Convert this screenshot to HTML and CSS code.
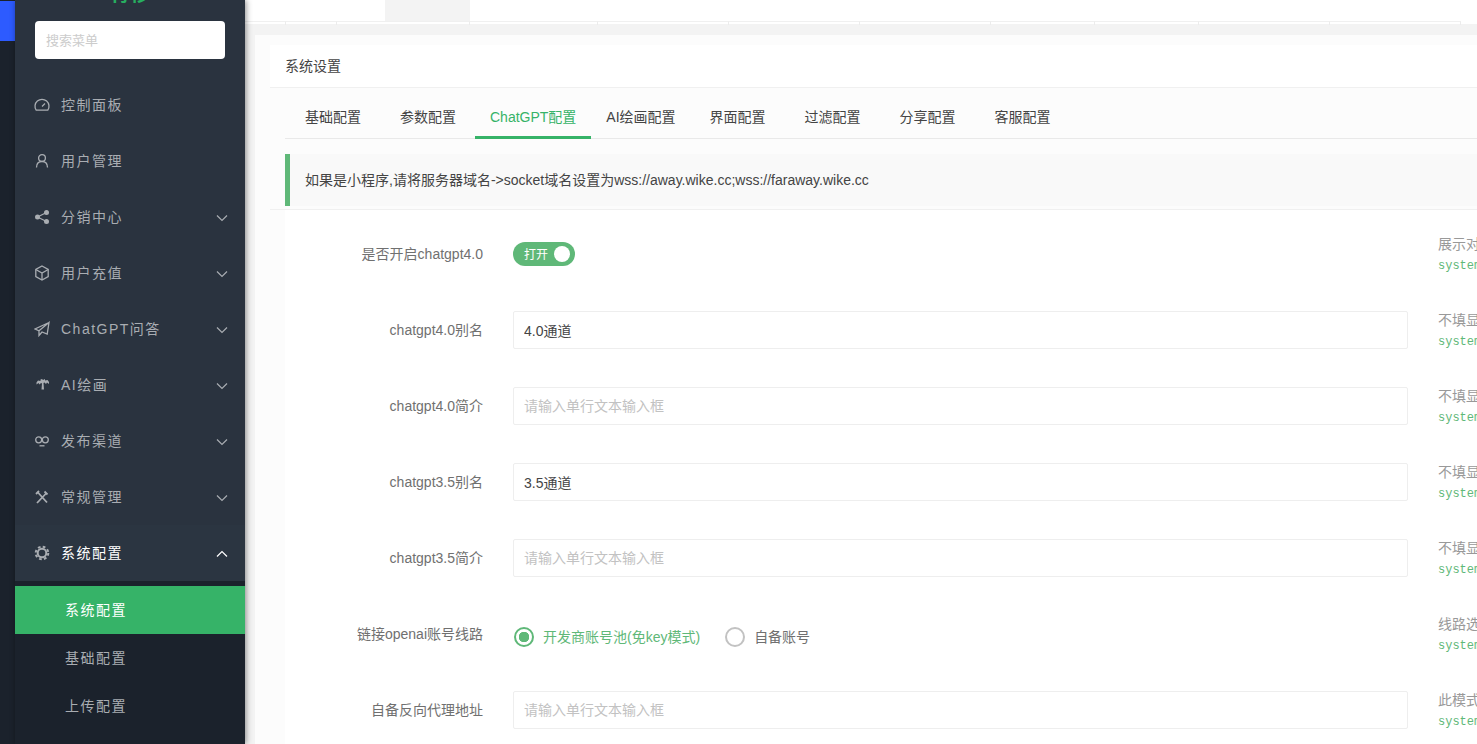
FILE: index.html
```html
<!DOCTYPE html>
<html lang="zh-CN">
<head>
    <meta charset="UTF-8">
    <title>系统设置</title>
    <link rel="stylesheet" href="styles.css">
</head>
<body>
    <div class="rail"><div class="rail-mark"></div></div>
    <aside class="side">
        <div class="logo"><span>青移</span></div>
        <div class="search"><input type="text" placeholder="搜索菜单"></div>
        <ul class="menu">
            <li class="item">
                <svg class="ico" viewBox="0 0 16 16"><path d="M2.2 13.2a7 7 0 1 1 11.6 0z"/><path d="M8 9.5l3-3"/></svg>
                <span>控制面板</span>
            </li>
            <li class="item">
                <svg class="ico" viewBox="0 0 16 16"><circle cx="8" cy="5" r="3.4"/><path d="M2.5 14.5c0-3.6 2-6 5.500-6s5.500 2.400 5.500 6"/></svg>
                <span>用户管理</span>
            </li>
            <li class="item">
                <svg class="ico fill" viewBox="0 0 16 16"><circle cx="3.500" cy="8" r="2.500"/><circle cx="12.500" cy="3.500" r="2.500"/><circle cx="12.500" cy="12.500" r="2.500"/><path class="ln" d="M3.500 8l9-4.500M3.500 8l9 4.500"/></svg>
                <span>分销中心</span>
                <svg class="arrow" viewBox="0 0 12 8"><path d="M1 1.500l5 5 5-5"/></svg>
            </li>
            <li class="item">
                <svg class="ico" viewBox="0 0 16 16"><path d="M8 1l6.200 3.500v7L8 15l-6.200-3.500v-7z"/><path d="M1.800 4.500L8 8l6.200-3.500M8 8v7"/></svg>
                <span>用户充值</span>
                <svg class="arrow" viewBox="0 0 12 8"><path d="M1 1.500l5 5 5-5"/></svg>
            </li>
            <li class="item">
                <svg class="ico" viewBox="0 0 16 16"><path d="M15 1.500L1 8l4 1.800L15 1.500l-1.800 11.500L8 11l-3 3.500V9.800"/></svg>
                <span>ChatGPT问答</span>
                <svg class="arrow" viewBox="0 0 12 8"><path d="M1 1.500l5 5 5-5"/></svg>
            </li>
            <li class="item">
                <svg class="ico fill" viewBox="0 0 16 16"><path d="M8 2l1 1 2-1v1.500l2.500-.5 1.500 2v2l-2-1.500-1 1.500-1.500-1.500-1 .5.500 6.500H7.500L8 6.500l-1-.5-1.500 1.500-1-1.500-2 1.500V5.500L4 3.500l2.500.5V2.500z"/></svg>
                <span>AI绘画</span>
                <svg class="arrow" viewBox="0 0 12 8"><path d="M1 1.500l5 5 5-5"/></svg>
            </li>
            <li class="item">
                <svg class="ico" viewBox="0 0 16 16"><circle cx="4.700" cy="6.800" r="3"/><circle cx="11.300" cy="6.800" r="3"/><path d="M5.500 12.800h5"/></svg>
                <span>发布渠道</span>
                <svg class="arrow" viewBox="0 0 12 8"><path d="M1 1.500l5 5 5-5"/></svg>
            </li>
            <li class="item">
                <svg class="ico thick" viewBox="0 0 16 16"><path d="M3 14l9.500-10M3.500 3l9.500 10.500"/><path d="M10.500 2.500l3 3M2 5l3-3"/></svg>
                <span>常规管理</span>
                <svg class="arrow" viewBox="0 0 12 8"><path d="M1 1.500l5 5 5-5"/></svg>
            </li>
            <li class="item open">
                <svg class="ico" viewBox="0 0 16 16"><circle class="ring" cx="8" cy="8" r="4.300"/><circle class="teeth" cx="8" cy="8" r="6.300"/></svg>
                <span>系统配置</span>
                <svg class="arrow" viewBox="0 0 12 8"><path d="M1 6.500l5-5 5 5"/></svg>
            </li>
        </ul>
        <ul class="sub">
            <li class="on">系统配置</li>
            <li>基础配置</li>
            <li>上传配置</li>
        </ul>
    </aside>
    <div class="main">
        <div class="tags">
            <div class="tag"></div>
            <div class="tag"></div>
            <div class="tag plain"></div>
            <div class="tag cur"></div>
            <div class="tag"></div>
            <div class="tag"></div>
            <div class="tag"></div>
            <div class="tag"></div>
            <div class="tag"></div>
            <div class="tag"></div>
            <div class="tag"></div>
            <div class="tag"></div>
        </div>
        <div class="page">
            <div class="card">
                <div class="card-head">系统设置</div>
                <div class="tabs">
                    <a class="tab">基础配置</a>
                    <a class="tab">参数配置</a>
                    <a class="tab gpt">ChatGPT配置</a>
                    <a class="tab ai">AI绘画配置</a>
                    <a class="tab">界面配置</a>
                    <a class="tab">过滤配置</a>
                    <a class="tab">分享配置</a>
                    <a class="tab">客服配置</a>
                </div>
                <div class="notice-wrap">
                    <div class="notice">如果是小程序,请将服务器域名-&gt;socket域名设置为wss://away.wike.cc;wss://faraway.wike.cc</div>
                </div>
                <div class="form">
                    <div class="row">
                        <label>是否开启chatgpt4.0</label>
                        <div><span class="switch"><em>打开</em><i></i></span></div>
                        <div class="help"><p>展示对话模型</p><code>system_config</code></div>
                    </div>
                    <div class="row">
                        <label>chatgpt4.0别名</label>
                        <input type="text" value="4.0通道">
                        <div class="help"><p>不填显示默认</p><code>system_config</code></div>
                    </div>
                    <div class="row">
                        <label>chatgpt4.0简介</label>
                        <input type="text" placeholder="请输入单行文本输入框">
                        <div class="help"><p>不填显示默认</p><code>system_config</code></div>
                    </div>
                    <div class="row">
                        <label>chatgpt3.5别名</label>
                        <input type="text" value="3.5通道">
                        <div class="help"><p>不填显示默认</p><code>system_config</code></div>
                    </div>
                    <div class="row">
                        <label>chatgpt3.5简介</label>
                        <input type="text" placeholder="请输入单行文本输入框">
                        <div class="help"><p>不填显示默认</p><code>system_config</code></div>
                    </div>
                    <div class="row">
                        <label>链接openai账号线路</label>
                        <div class="radios">
                            <span class="radio sel"><i></i><b>开发商账号池(免key模式)</b></span>
                            <span class="radio"><i></i><b>自备账号</b></span>
                        </div>
                        <div class="help"><p>线路选择说明</p><code>system_config</code></div>
                    </div>
                    <div class="row">
                        <label>自备反向代理地址</label>
                        <input type="text" placeholder="请输入单行文本输入框">
                        <div class="help"><p>此模式下填写</p><code>system_config</code></div>
                    </div>
                </div>
            </div>
        </div>
    </div>
</body>
</html>
```

FILE: styles.css
```css
*{
    padding: 0;
    margin: 0;
    box-sizing: border-box;
}
ul{
    list-style: none;
}
html,body{
    height: 100%;
    overflow: hidden;
}
body{
    display: flex;
    font-family: "Liberation Sans", "Noto Sans CJK SC", sans-serif;
    font-size: 14px;
    color: #444;
    background-color: #f3f3f3;
}
.rail{
    width: 15px;
    flex: none;
    padding-top: 1px;
    background-color: #1b222c;
}
.rail-mark{
    height: 40px;
    background-color: #2d5bff;
}
.side{
    width: 230px;
    flex: none;
    background-color: #2a333f;
    box-shadow: 1px 0 6px rgba(0, 0, 0, .45);
    display: flex;
    flex-direction: column;
    position: relative;
    z-index: 2;
}
.logo{
    height: 7px;
    margin-bottom: 14px;
    display: flex;
    justify-content: center;
    align-items: flex-end;
    overflow: hidden;
}
.logo span{
    font-size: 20px;
    line-height: 26px;
    font-weight: 700;
    color: #27ae60;
    flex: none;
}
.search{
    padding: 0 20px;
    margin-bottom: 18px;
}
.search input{
    display: block;
    width: 100%;
    height: 38px;
    border: 0;
    border-radius: 4px;
    padding: 0 11px;
    background-color: #fff;
    font: 13px "Liberation Sans", "Noto Sans CJK SC", sans-serif;
    outline: none;
}
.search input::placeholder{
    color: #ccc;
}
.item{
    height: 56px;
    padding: 0 17px 0 19px;
    display: flex;
    align-items: center;
    color: #a9adb2;
    letter-spacing: 1.5px;
}
.item span{
    flex: 1;
    margin-left: 11px;
    padding-bottom: 2px;
}
.item.open{
    color: #fff;
    background-color: #2b3541;
}
.ico{
    width: 16px;
    height: 16px;
    flex: none;
    fill: none;
    stroke: #a9adb2;
    stroke-width: 1.3;
}
.ico.fill{
    fill: #a9adb2;
    stroke: none;
}
.ico .ln{
    stroke: #a9adb2;
    stroke-width: 1.300;
}
.ico.thick{
    stroke-width: 1.800;
}
.ico .ring{
    stroke-width: 2;
}
.ico .teeth{
    stroke-width: 2;
    stroke-dasharray: 2.700 2.248;
}
.arrow{
    width: 12px;
    height: 8px;
    margin-top: 2px;
    flex: none;
    fill: none;
    stroke: #a9adb2;
    stroke-width: 1.200;
}
.open .arrow{
    stroke: #fff;
}
.sub{
    flex: 1;
    padding-top: 5px;
    background-color: #1b222c;
}
.sub li{
    height: 48px;
    line-height: 48px;
    padding-left: 50px;
    letter-spacing: 1.5px;
    color: #a9adb2;
}
.sub li.on{
    color: #fff;
    background-color: #36b368;
}
.main{
    flex: 1;
    min-width: 0;
    overflow: hidden;
}
.tags{
    display: flex;
    height: 24px;
    background-color: #fff;
}
.tag{
    height: 24px;
    flex: none;
    width: 131px;
}
.tag::after{
    content: "";
    display: block;
    height: 3px;
    margin-top: 21px;
    margin-bottom: -24px;
    border-top: 1px solid #f0f0f0;
    border-right: 1px solid #ececec;
}
.tag:nth-child(1){
    width: 41px;
}
.tag:nth-child(2){
    width: 51px;
}
.tag:nth-child(3){
    width: 48px;
}
.tag:nth-child(5){
    width: 128px;
}
.tag:nth-child(9),.tag:nth-child(10){
    width: 104px;
}
.tag.plain::after{
    border-right: 0;
}
.tag.cur{
    width: 85px;
    background: linear-gradient(#f3f3f3 21px, transparent 21px);
}
.page{
    padding: 11px 0 0 10px;
    width: 1232px;
}
.card{
    background-color: #fcfcfc;
    padding: 10px 0 0 15px;
    height: 760px;
}
.card-head{
    height: 43px;
    line-height: 42px;
    padding-left: 15px;
    background-color: #fff;
    border-bottom: 1px solid #f0f0f0;
}
.tabs{
    height: 51px;
    margin-left: 15px;
    padding-top: 10px;
    display: flex;
    border-bottom: 1px solid #e9e9e9;
}
.tab{
    height: 41px;
    line-height: 39px;
    padding: 0 15px;
    margin-left: 5px;
    margin-right: 4px;
    flex: none;
}
.tab.gpt{
    margin-left: 0;
    margin-right: 0;
    color: #36b368;
    border-bottom: 3px solid #36b368;
}
.tab.ai{
    margin-left: 0;
    margin-right: -1px;
}
.notice-wrap{
    height: 71px;
    padding: 15px 0 0 15px;
    border-bottom: 1px solid #f0f0f0;
}
.notice{
    height: 52px;
    line-height: 52px;
    padding-left: 15px;
    background-color: #f9f9f9;
    border-left: 5px solid #5fb878;
}
.form{
    margin-left: 15px;
    padding-top: 6px;
    background-color: #fff;
}
.row{
    height: 76px;
    display: grid;
    grid-template-columns: 198px 895px 200px;
    column-gap: 30px;
    align-items: center;
}
.row label{
    text-align: right;
    color: #707070;
    margin-bottom: 2px;
}
.row input{
    height: 38px;
    border: 1px solid #eee;
    border-radius: 2px;
    padding: 0 10px;
    color: #444;
    font: 14px "Liberation Sans", "Noto Sans CJK SC", sans-serif;
    outline: none;
}
.row input::placeholder{
    color: #c2c2c2;
}
.switch{
    display: flex;
    align-items: center;
    justify-content: space-between;
    width: 62px;
    height: 24px;
    border-radius: 12px;
    padding: 0 5px 0 11px;
    background-color: #5fb878;
}
.switch em{
    font-style: normal;
    font-size: 12px;
    color: #fff;
    margin-bottom: 2px;
}
.switch i{
    width: 16px;
    height: 16px;
    border-radius: 50%;
    background-color: #fff;
}
.radios{
    display: flex;
    gap: 25px;
    margin: 6px 0 0 1px;
    color: #707070;
}
.radio{
    display: flex;
    align-items: center;
    gap: 9px;
}
.radio b{
    font-weight: 400;
    padding-bottom: 2px;
}
.radio i{
    width: 20px;
    height: 20px;
    border: 2px solid #c2c2c2;
    border-radius: 50%;
}
.radio.sel{
    color: #5fb878;
}
.radio.sel i{
    border-color: #5fb878;
    background: radial-gradient(circle, #5fb878 5px, #fff 5.500px);
}
.help{
    padding-top: 2px;
    white-space: nowrap;
    overflow: hidden;
    color: #999;
    line-height: 20px;
}
.help code{
    display: block;
    margin-top: 2px;
    font: 12px/20px "Liberation Mono", monospace;
    color: #5fb878;
}
```
